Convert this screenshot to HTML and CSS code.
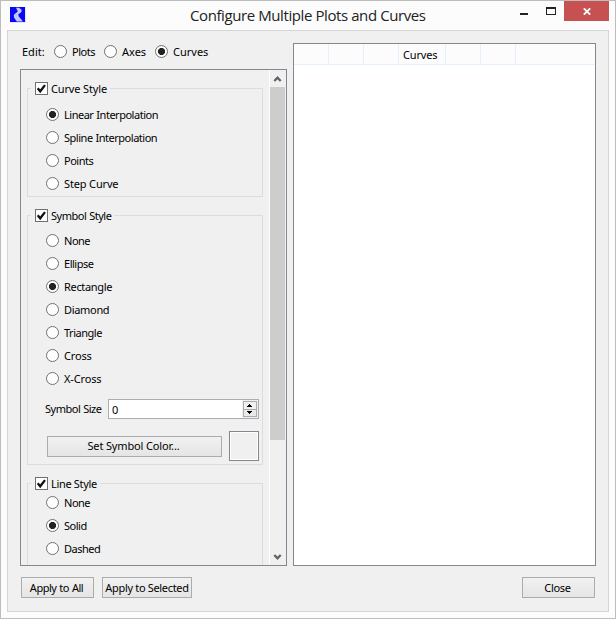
FILE: index.html
```html
<!DOCTYPE html>
<html lang="en">
<head>
<meta charset="utf-8">
<title>Configure Multiple Plots and Curves</title>
<link rel="stylesheet" href="styles.css">
</head>
<body>
<div class="window">
  <header class="titlebar">
    <svg class="app-icon" width="16" height="16" viewBox="0 0 16 16"><rect width="15.5" height="15.5" fill="#c9c9ff"/><rect width="15" height="15" fill="#0808f4"/><path d="M6 .8h3l2.6 2-.2 2.300L8.200 7.500l.6 2L13 14.600H6.800L4 10.600l-.2-2.800L7.800 4.600z" fill="#c6c6ff"/></svg>
    <h1 class="title">Configure Multiple Plots and Curves</h1>
    <div class="win-buttons">
      <svg width="45" height="20" viewBox="0 0 45 20" shape-rendering="crispEdges"><rect x="1" y="12" width="8" height="2" fill="#222"/><path d="M27 6h10v8H27zM28 8v5h8V8z" fill="#222" fill-rule="evenodd"/></svg>
      <span class="close"><svg width="8" height="7" viewBox="0 0 8 7"><path d="M.8.3l6.4 6.4M7.2.3L.8 6.7" stroke="#fff" stroke-width="1.8"/></svg></span>
    </div>
  </header>
  <main class="client">
    <div class="columns">
      <section class="left">
        <div class="edit-row">
          <span class="edit-label">Edit:</span>
          <span class="option plots tight"><i class="radio"></i>Plots</span>
          <span class="option axes"><i class="radio"></i>Axes</span>
          <span class="option"><i class="radio on"></i>Curves</span>
        </div>
        <div class="scroll">
          <div class="content">
            <section class="group curve">
              <div class="legend snug"><svg class="check" width="13" height="13" viewBox="0 0 13 13"><rect x=".5" y=".5" width="12" height="12" fill="#fff" stroke="#707070"/><path d="M2.7 6.3l2.5 3 4.8-6.2" fill="none" stroke="#111" stroke-width="2.3"/></svg><span>Curve Style</span></div>
              <div class="options">
                <span class="option tight"><i class="radio on"></i>Linear Interpolation</span>
                <span class="option tight"><i class="radio"></i>Spline Interpolation</span>
                <span class="option tight"><i class="radio"></i>Points</span>
                <span class="option snug"><i class="radio"></i>Step Curve</span>
              </div>
            </section>
            <section class="group symbol">
              <div class="legend tight"><svg class="check" width="13" height="13" viewBox="0 0 13 13"><rect x=".5" y=".5" width="12" height="12" fill="#fff" stroke="#707070"/><path d="M2.7 6.3l2.5 3 4.8-6.2" fill="none" stroke="#111" stroke-width="2.3"/></svg><span>Symbol Style</span></div>
              <div class="options">
                <span class="option tight"><i class="radio"></i>None</span>
                <span class="option tight"><i class="radio"></i>Ellipse</span>
                <span class="option close-set"><i class="radio on"></i>Rectangle</span>
                <span class="option close-set"><i class="radio"></i>Diamond</span>
                <span class="option tight"><i class="radio"></i>Triangle</span>
                <span class="option snug"><i class="radio"></i>Cross</span>
                <span class="option snug"><i class="radio"></i>X-Cross</span>
              </div>
              <div class="size-row">
                <span class="size-label tight">Symbol Size</span>
                <div class="spin"><span class="value">0</span>
                  <svg width="16" height="18" viewBox="0 0 16 18" shape-rendering="crispEdges"><rect width="16" height="18" fill="#f0f0f0"/><rect x="1.5" y="1.5" width="13" height="8" fill="#f0f0f0" stroke="#acacac"/><rect x="1.5" y="9.5" width="13" height="7" fill="#e9e9e9" stroke="#acacac"/><path d="M7 4h1v1h1v1h1v1H5V6h1V5h1zM5 11h5v1H9v1H8v1H7v-1H6v-1H5z" fill="#000"/></svg>
                </div>
              </div>
              <div class="color-row"><span class="button set-color snug">Set Symbol Color...</span><span class="swatch"></span></div>
            </section>
            <section class="group line">
              <div class="legend close-set"><svg class="check" width="13" height="13" viewBox="0 0 13 13"><rect x=".5" y=".5" width="12" height="12" fill="#fff" stroke="#707070"/><path d="M2.7 6.3l2.5 3 4.8-6.2" fill="none" stroke="#111" stroke-width="2.3"/></svg><span>Line Style</span></div>
              <div class="options">
                <span class="option tight"><i class="radio"></i>None</span>
                <span class="option tight"><i class="radio on"></i>Solid</span>
                <span class="option tight"><i class="radio"></i>Dashed</span>
              </div>
            </section>
          </div>
          <div class="scrollbar">
            <svg width="15" height="17" viewBox="0 0 15 17"><path d="M4.300 11L7.500 7.700 10.700 11" fill="none" stroke="#606060" stroke-width="2.2"/></svg>
            <div class="thumb"></div>
            <svg class="down" width="15" height="17" viewBox="0 0 15 17"><path d="M4.300 7l3.200 3.300 3.200-3.300" fill="none" stroke="#606060" stroke-width="2.2"/></svg>
          </div>
        </div>
      </section>
      <section class="table">
        <div class="thead"><span></span><span></span><span></span><span class="snug">Curves</span><span></span><span></span><span></span></div>
      </section>
    </div>
    <footer class="footer">
      <span class="button all tight">Apply to All</span>
      <span class="button selected close-set">Apply to Selected</span>
      <span class="button close-button close-set">Close</span>
    </footer>
  </main>
</div>
</body>
</html>
```
FILE: styles.css
```css
* { box-sizing: border-box; }
body { margin: 0; font: 11px/14px "Noto Sans", sans-serif; color: #000; }
svg { display: block; flex: none; }
.snug { letter-spacing: -.15px; }
.close-set { letter-spacing: -.32px; }
.tight { letter-spacing: -.48px; word-spacing: .5px; }
.window { width: 616px; height: 619px; border: 1px solid #bdbdbd; background: #fcfcfc; padding: 0 6px; }
.titlebar { height: 29px; display: grid; grid-template-columns: 183px 1fr 90px; }
.app-icon { margin: 6px 0 0 3px; }
.title { margin: 4px 0 0; font: 15px/20px "Open Sans", sans-serif; letter-spacing: -.41px; color: #222; white-space: nowrap; }
.win-buttons { display: flex; }
.close { width: 45px; height: 20px; background: #c75050; display: flex; align-items: center; justify-content: center; padding-top: 1px; }
.client { width: 602px; height: 582px; border: 1px solid #d5d5d5; background: #f0f0f0; padding: 12px; }
.columns { display: flex; gap: 6px; height: 523px; }
.left { width: 267px; display: flex; flex-direction: column; }
.edit-row { height: 26px; padding: 1px 0 0 2px; display: flex; align-items: flex-start; line-height: 15px; }
.edit-label { width: 32px; }
.plots { width: 50px; }
.axes { width: 51px; }
.option { display: flex; align-items: center; gap: 5px; white-space: nowrap; }
.radio { width: 13px; height: 13px; border: 1px solid #707070; border-radius: 50%; background: #fff; flex: none; }
.radio.on { background: radial-gradient(circle, #222 0 3.2px, #fff 3.9px); }
.scroll { height: 497px; border: 1px solid #828790; display: flex; overflow: hidden; }
.content { width: 248px; padding: 18px 0 0 6px; }
.group { width: 236px; border: 1px solid #dcdcdc; }
.curve { height: 109px; }
.symbol { height: 250px; margin-top: 18px; }
.line { height: 140px; margin-top: 18px; }
.legend { width: max-content; height: 14px; margin: -8px 0 0 3px; padding: 0 3px 0 4px; display: flex; align-items: center; gap: 3px; background: #f0f0f0; }
.legend span { padding-top: 2px; }
.options { padding: 7px 0 0 18px; }
.options .option { height: 23px; }
.curve .options { padding-top: 8px; }
.line .options { padding-top: 1px; }
.size-row { display: flex; align-items: center; margin: 9px 0 0 17px; }
.size-label { width: 63px; }
.spin { width: 151px; height: 20px; border: 1px solid #abadb3; background: #fff; display: flex; justify-content: space-between; align-items: center; padding-left: 3px; }
.value { padding-top: 2px; }
.color-row { display: flex; align-items: center; margin: 12px 0 0 19px; gap: 7px; }
.button { border: 1px solid #acacac; background: linear-gradient(#f1f1f1, #e5e5e5); height: 21px; display: flex; align-items: center; justify-content: center; white-space: nowrap; padding-right: 2px; }
.set-color { width: 175px; }
.swatch { width: 30px; height: 30px; border: 1px solid #828790; box-shadow: inset 0 0 0 1px #fff; }
.scrollbar { width: 17px; border-left: 1px solid #fff; display: flex; flex-direction: column; }
.thumb { width: 15px; height: 353px; background: #cdcdcd; }
.down { margin-top: auto; }
.table { width: 303px; height: 523px; border: 1px solid #828790; background: #fff; }
.thead { height: 21px; border-bottom: 1px solid #e5f0fc; background: #fcfcfc; display: grid; grid-template-columns: 35px 35px 35px 47px 35px 35px 1fr; }
.thead span { border-right: 1px solid #e5f0fc; padding: 4px 0 0 4px; }
.thead span:last-child { border: 0; }
.footer { display: flex; margin: 11px 0 0 1px; }
.all { width: 73px; margin-right: 8px; }
.selected { width: 90px; padding-right: 0; }
.close-button { width: 73px; margin-left: auto; margin-right: 1px; }
```
